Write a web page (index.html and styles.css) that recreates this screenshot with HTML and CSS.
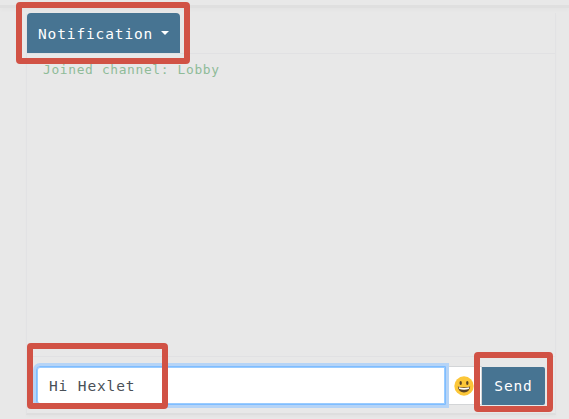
FILE: index.html
```html
<!DOCTYPE html>
<html lang="en">
<head>
<meta charset="utf-8">
<title>Lobby</title>
<link rel="stylesheet" href="styles.css">
</head>
<body>
<div class="topbar"></div>
<main class="chat">
  <header class="chat-header">
    <button class="btn dropdown">Notification<span class="caret"></span></button>
  </header>
  <section class="messages"><p class="status">Joined channel: Lobby</p></section>
  <form class="composer">
    <div class="field">Hi Hexlet</div>
    <div class="emoji">
      <svg width="20" height="20" viewBox="0 0 20 20" aria-hidden="true">
        <circle cx="10" cy="10" r="9.7" fill="#fcc739"/>
        <ellipse cx="6.7" cy="7" rx="1.2" ry="1.9" fill="#5c4424"/>
        <ellipse cx="13.3" cy="7" rx="1.2" ry="1.9" fill="#5c4424"/>
        <path d="M3.8 10.5Q10 12.2 16.2 10.5Q15.4 16.4 10 16.4T3.8 10.5Z" fill="#5c4424"/>
        <path d="M4.7 11.3Q10 12.8 15.3 11.3L14.8 13Q10 14.4 5.2 13Z" fill="#fff"/>
      </svg>
    </div>
    <button class="btn send" type="button">Send</button>
  </form>
</main>
<div class="mark mark-menu"></div>
<div class="mark mark-input"></div>
<div class="mark mark-send"></div>
</body>
</html>
```
FILE: styles.css
```css
* { box-sizing: border-box; }
body {
  margin: 0;
  height: 419px;
  overflow: hidden;
  position: relative;
  background: #e8e8e8;
  font: 14.5px/24px "DejaVu Sans Mono", monospace;
  letter-spacing: 0.87px;
}
.topbar {
  height: 8px;
  border-bottom: 3px solid #dfdfdf;
  box-shadow: 0 2px 4px rgba(0, 0, 0, 0.025);
}
.chat {
  display: flex;
  flex-direction: column;
  width: 530px;
  height: 402px;
  margin: 5px 0 0 26px;
  border: 1px solid #e2e2e4;
  border-top: 0;
  border-bottom: 2px solid #dedede;
  box-shadow: 0 2px 3px rgba(0, 0, 0, 0.02);
}
.chat-header {
  height: 41px;
  border-bottom: 1px solid #e1e1e3;
}
.btn {
  margin: 0;
  border: 0;
  color: #fff;
  background: #477492;
  font: inherit;
  letter-spacing: inherit;
}
.dropdown {
  display: flex;
  align-items: center;
  width: 153px;
  height: 40px;
  padding: 2px 0 0 11px;
  border-radius: 4px 4px 0 0;
}
.caret {
  margin: -3px 0 0 8px;
  border: 4px solid transparent;
  border-top-color: #fff;
  border-bottom: 0;
}
.messages {
  flex: 1;
  padding: 5px 16px;
}
.status {
  margin: 0;
  color: #8fbb98;
  font-size: 12.9px;
  line-height: 21px;
  letter-spacing: 0.65px;
}
.composer {
  display: flex;
  height: 57px;
  margin: 0;
  padding: 9px 10px 8px 9px;
  border-top: 1px solid #e1e1e3;
}
.field {
  position: relative;
  z-index: 1;
  width: 410px;
  padding: 7px 12px;
  color: #495057;
  background: #fff;
  border: 1px solid #80bdff;
  border-radius: 4px 0 0 4px;
  box-shadow: 0 0 0 3px #b5d4f7, inset 0 0 0 1px #9accff;
}
.emoji {
  display: flex;
  align-items: center;
  justify-content: center;
  width: 36px;
  background: #fff;
  border: 1px solid #d3d5d7;
  border-left: 0;
}
.send {
  flex: 1;
  margin-top: 1px;
  padding: 0;
  border-radius: 0 2px 2px 0;
}
.mark {
  position: absolute;
  z-index: 2;
  border: 6px solid #d15245;
  border-radius: 4px;
}
.mark-menu { left: 16px; top: 2px; width: 174px; height: 62px; }
.mark-input { left: 27px; top: 343px; width: 141px; height: 66px; }
.mark-send { left: 474px; top: 352px; width: 79px; height: 60px; }
```
